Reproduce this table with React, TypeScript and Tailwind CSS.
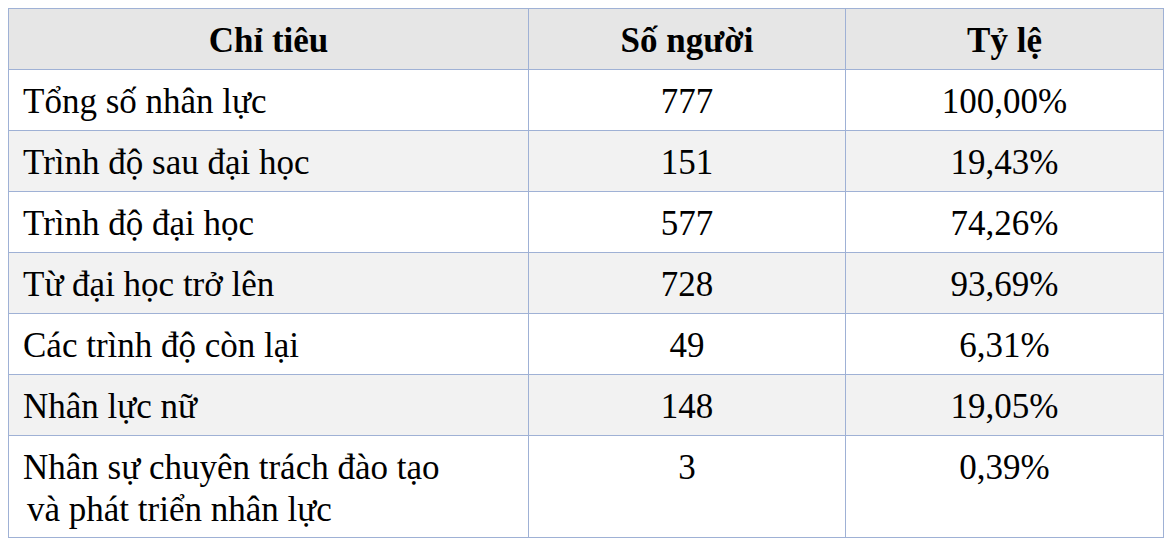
import React from "react";

const rows: { label: React.ReactNode; n: string; p: string; gray: boolean; tall?: boolean }[] = [
  { label: "Tổng số nhân lực", n: "777", p: "100,00%", gray: false },
  { label: "Trình độ sau đại học", n: "151", p: "19,43%", gray: true },
  { label: "Trình độ đại học", n: "577", p: "74,26%", gray: false },
  { label: "Từ đại học trở lên", n: "728", p: "93,69%", gray: true },
  { label: "Các trình độ còn lại", n: "49", p: "6,31%", gray: false },
  { label: "Nhân lực nữ", n: "148", p: "19,05%", gray: true },
  {
    label: (
      <>
        <span className="block">Nhân sự chuyên trách đào tạo</span>
        <span className="block pl-[4px]">và phát triển nhân lực</span>
      </>
    ),
    n: "3",
    p: "0,39%",
    gray: false,
    tall: true,
  },
];

export default function App() {
  return (
    <div
      className="w-[1175px] h-[546px] bg-white pt-[8px] pl-[8px] text-black"
      style={{ fontFamily: '"Liberation Serif", "Times New Roman", serif' }}
    >
      <table className="border-collapse table-fixed w-[1155px] text-[35px] leading-[42px]">
        <colgroup>
          <col className="w-[520px]" />
          <col className="w-[317px]" />
          <col className="w-[318px]" />
        </colgroup>
        <thead>
          <tr className="h-[61px] bg-[#e6e6e6]">
            <th className="border border-[#9fb1d5] font-bold text-center align-top pt-[11px] p-0">Chỉ tiêu</th>
            <th className="border border-[#9fb1d5] font-bold text-center align-top pt-[11px] p-0">Số người</th>
            <th className="border border-[#9fb1d5] font-bold text-center align-top pt-[11px] p-0">Tỷ lệ</th>
          </tr>
        </thead>
        <tbody>
          {rows.map((r, i) => (
            <tr key={i} className={`${r.tall ? "h-[102px]" : "h-[61px]"} ${r.gray ? "bg-[#f2f2f2]" : "bg-white"}`}>
              <td className="border border-[#9fb1d5] pl-[14px] pt-[11px] text-left align-top">{r.label}</td>
              <td className="border border-[#9fb1d5] pt-[11px] text-center align-top">{r.n}</td>
              <td className="border border-[#9fb1d5] pt-[11px] text-center align-top">{r.p}</td>
            </tr>
          ))}
        </tbody>
      </table>
    </div>
  );
}
